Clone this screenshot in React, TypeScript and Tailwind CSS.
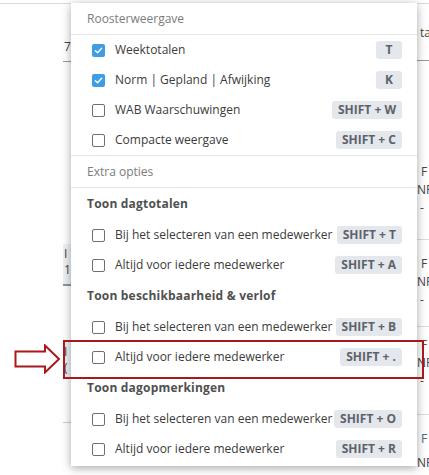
import React from "react";

type Option = {
  label: string;
  shortcut: string;
  checked?: boolean;
};

type Group = {
  title: string;
  options: Option[];
};

const viewOptions: Option[] = [
  { label: "Weektotalen", shortcut: "T", checked: true },
  { label: "Norm | Gepland | Afwijking", shortcut: "K", checked: true },
  { label: "WAB Waarschuwingen", shortcut: "SHIFT + W" },
  { label: "Compacte weergave", shortcut: "SHIFT + C" },
];

const groups: Group[] = [
  {
    title: "Toon dagtotalen",
    options: [
      { label: "Bij het selecteren van een medewerker", shortcut: "SHIFT + T" },
      { label: "Altijd voor iedere medewerker", shortcut: "SHIFT + A" },
    ],
  },
  {
    title: "Toon beschikbaarheid & verlof",
    options: [
      { label: "Bij het selecteren van een medewerker", shortcut: "SHIFT + B" },
      { label: "Altijd voor iedere medewerker", shortcut: "SHIFT + ." },
    ],
  },
  {
    title: "Toon dagopmerkingen",
    options: [
      { label: "Bij het selecteren van een medewerker", shortcut: "SHIFT + O" },
      { label: "Altijd voor iedere medewerker", shortcut: "SHIFT + R" },
    ],
  },
];

function Checkbox({ checked }: { checked?: boolean }) {
  if (checked) {
    return (
      <span className="flex h-[13px] w-[13px] shrink-0 items-center justify-center rounded-[2px] bg-[#3f9de3]">
        <svg width="9" height="9" viewBox="0 0 10 10" fill="none">
          <path d="M1.5 5.2 L4 7.5 L8.5 2.5" stroke="#fff" strokeWidth="1.6" strokeLinecap="round" strokeLinejoin="round" />
        </svg>
      </span>
    );
  }
  return <span className="h-[13px] w-[13px] shrink-0 rounded-[2px] border border-[#6f6f6f] bg-white" />;
}

function Shortcut({ keys }: { keys: string }) {
  return (
    <span className="flex h-[18px] min-w-[26px] items-center justify-center rounded-[3px] bg-[#e4e7ec] px-[6px] text-[12px] font-bold text-[#5d626a]">
      {keys}
    </span>
  );
}

function OptionRow({ option }: { option: Option }) {
  return (
    <div className="flex h-[30px] items-center pl-[21px] pr-[15px]">
      <Checkbox checked={option.checked} />
      <span className="ml-[10px] flex-1 text-[12px] text-[#3b3b3b]">{option.label}</span>
      <Shortcut keys={option.shortcut} />
    </div>
  );
}

function BackgroundTable() {
  return (
    <div className="flex h-full border-t border-[#d9d9d9] text-[12px] text-[#444]">
      <div className="w-[63px]" />
      <div className="flex w-[60px] flex-col">
        <div className="flex h-[58px] items-end border-b border-[#9a9a9a] pb-[5px] pl-[1px]">72</div>
        <div className="h-[182px]" />
        <div className="flex h-[42px] flex-col border-b-2 border-[#8797ab] bg-[#eef1f4] pl-[1px] pt-[2px] leading-[16px]">
          <span>I</span>
          <span>1</span>
        </div>
        <div className="h-[55px]" />
        <div className="flex h-[38px] flex-col bg-[#eef1f4] pl-[1px] pt-[3px] leading-[16px]">
          <span>I</span>
          <span>(</span>
        </div>
        <div className="h-[44px] border-b border-[#cfcfcf]" />
      </div>
      <div className="flex-1" />
      <div className="flex w-[24px] flex-col">
        <div className="flex h-[59px] items-center border-b border-[#9a9a9a] pl-[15px] pt-[2px]">ta</div>
        <div className="h-[105px]" />
        <div className="flex h-[79px] flex-col border-b border-[#dddddd] pl-[11px] leading-[18px]">
          <span className="pl-[5px]">F</span>
          <span className="pl-[1px]">NF</span>
          <span className="pl-[4px]">-</span>
        </div>
        <div className="flex h-[89px] flex-col border-b border-[#dddddd] pt-[15px] pl-[11px] leading-[18px]">
          <span className="pl-[5px]">F</span>
          <span className="pl-[1px]">NF</span>
          <span className="pl-[4px]">-</span>
        </div>
        <div className="flex h-[90px] flex-col border-b border-[#dddddd] pt-[9px] pl-[11px] leading-[18px]">
          <span className="pl-[5px] text-[#7a4a3a]">F</span>
          <span className="pl-[1px]">NF</span>
          <span className="pl-[4px]">-</span>
        </div>
        <div className="flex flex-col pt-[12px] pl-[11px] leading-[24px]">
          <span className="pl-[5px] text-[#4a6a8a]">F</span>
          <span className="pl-[1px]">NF</span>
        </div>
      </div>
    </div>
  );
}

export default function App() {
  return (
    <div
      className="relative h-[475px] w-[429px] overflow-hidden bg-white"
      style={{ fontFamily: "'Open Sans', 'Noto Sans', sans-serif" }}
    >
      <div className="h-full pt-[3px]">
        <BackgroundTable />
      </div>

      {/* dropdown menu */}
      <div className="absolute left-[71px] top-[3px] w-[346px] bg-white pb-[2px] shadow-[0_2px_9px_rgba(0,0,0,0.35)]">
        <div className="flex h-[32px] items-center border-b border-[#e6e6e6] pl-[16px] text-[12px] text-[#7c7c7c]">
          Roosterweergave
        </div>
        {viewOptions.map((o) => (
          <OptionRow key={o.label} option={o} />
        ))}
        <div className="flex h-[33px] items-center border-y border-[#e6e6e6] pl-[16px] text-[12px] text-[#7c7c7c]">
          Extra opties
        </div>
        {groups.map((g) => (
          <div key={g.title}>
            <div className="flex h-[32px] items-center pl-[16px] text-[12px] font-bold tracking-[0.2px] text-[#505050]">
              {g.title}
            </div>
            {g.options.map((o) => (
              <OptionRow key={o.shortcut} option={o} />
            ))}
          </div>
        ))}
      </div>

      {/* annotation */}
      <div className="absolute left-[63px] top-[340px] h-[39px] w-[361px] border-2 border-[#a8191c]" />
      <svg className="absolute left-[14px] top-[344px]" width="47" height="30" viewBox="0 0 47 30">
        <path
          d="M1.5 7.5 H31 V1.5 L45 15 L31 28.5 V22.5 H1.5 Z"
          fill="#fff"
          stroke="#a8191c"
          strokeWidth="2"
          strokeLinejoin="miter"
        />
      </svg>
    </div>
  );
}
